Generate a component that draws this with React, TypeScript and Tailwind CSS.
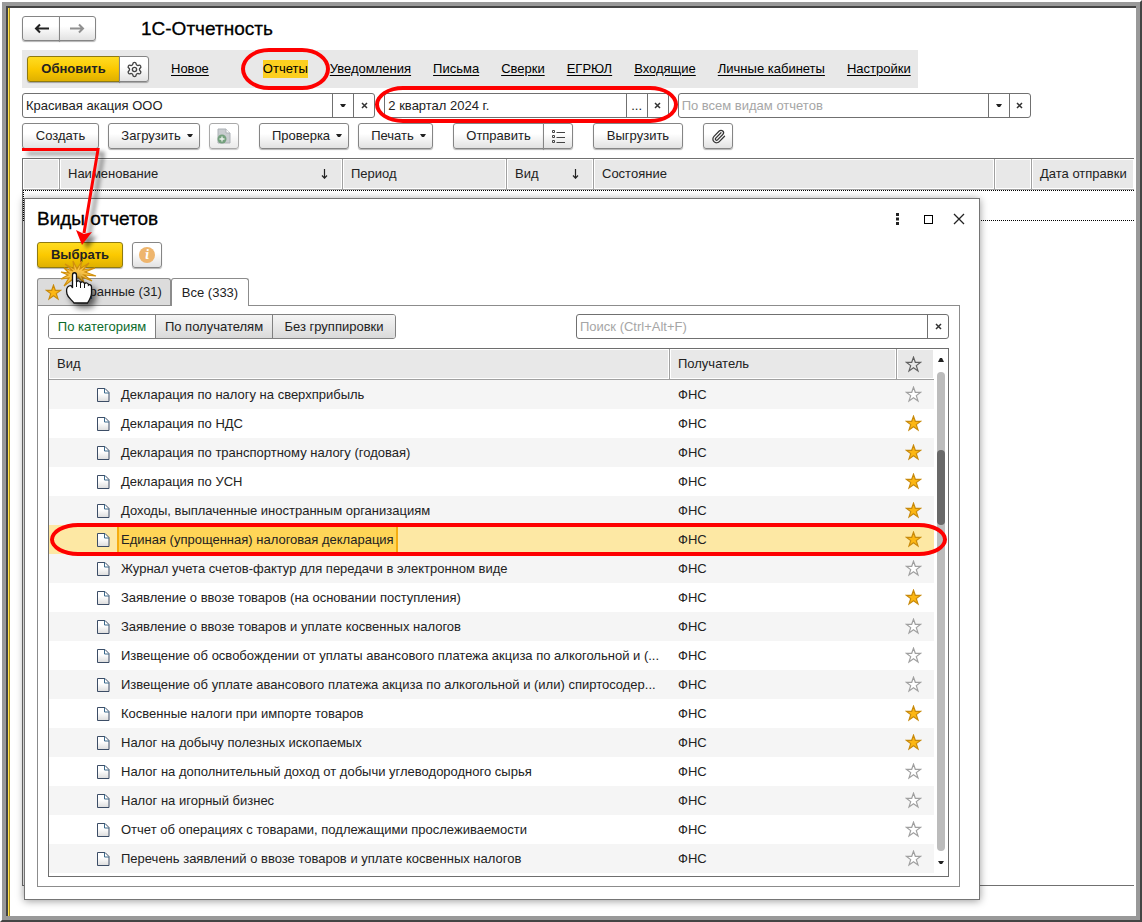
import { useState } from "react";
import { Paperclip, Settings } from "lucide-react";

interface Report {
  name: string;
  favorite?: boolean;
}

const reports: Report[] = [
  { name: "Декларация по налогу на сверхприбыль" },
  { name: "Декларация по НДС", favorite: true },
  { name: "Декларация по транспортному налогу (годовая)", favorite: true },
  { name: "Декларация по УСН", favorite: true },
  { name: "Доходы, выплаченные иностранным организациям", favorite: true },
  { name: "Единая (упрощенная) налоговая декларация", favorite: true },
  { name: "Журнал учета счетов-фактур для передачи в электронном виде" },
  { name: "Заявление о ввозе товаров (на основании поступления)", favorite: true },
  { name: "Заявление о ввозе товаров и уплате косвенных налогов" },
  { name: "Извещение об освобождении от уплаты авансового платежа акциза по алкогольной и (..." },
  { name: "Извещение об уплате авансового платежа акциза по алкогольной и (или) спиртосодер..." },
  { name: "Косвенные налоги при импорте товаров", favorite: true },
  { name: "Налог на добычу полезных ископаемых", favorite: true },
  { name: "Налог на дополнительный доход от добычи углеводородного сырья" },
  { name: "Налог на игорный бизнес" },
  { name: "Отчет об операциях с товарами, подлежащими прослеживаемости" },
  { name: "Перечень заявлений о ввозе товаров и уплате косвенных налогов" },
];

const sections = ["Уведомления", "Письма", "Сверки", "ЕГРЮЛ", "Входящие", "Личные кабинеты", "Настройки"];

const btn =
  "flex items-center justify-center border border-[#858585] bg-linear-to-b from-white from-40% to-[#e2e2e2] shadow-[0_1px_1px_rgba(0,0,0,0.3)]";
const yellowBtn =
  "flex items-center justify-center border border-[#8f7a10] bg-linear-to-b from-[#ffdc1e] via-[#fbc900] to-[#dfb000] font-bold shadow-[0_1px_1px_rgba(0,0,0,0.3)]";
const th = "border-b border-l border-[#a0a0a0] bg-[#e8e8e8] px-2 text-left font-normal shadow-[inset_0_0_0_1px_white]";

function Caret({ up = false }: { up?: boolean }) {
  return (
    <svg width="6" height="4" viewBox="0 0 6 4" className="shrink-0" aria-hidden="true">
      <path d={up ? "M0 4h6L4 0H2z" : "M0 0h6L4 3H2z"} fill="#222" />
    </svg>
  );
}

function Cross() {
  return (
    <svg width="7" height="7" viewBox="0 0 7 7" aria-hidden="true">
      <path d="M1 1l5 5M6 1L1 6" stroke="#333" strokeWidth="1.5" />
    </svg>
  );
}

function Star({ fill = "none", stroke = "#a0a0a0" }: { fill?: string; stroke?: string }) {
  return (
    <svg width="17" height="17" viewBox="0 0 17 17" aria-hidden="true">
      <path
        d="M8.5 1.2l1.8 5.1h5.4l-4.4 3.3 1.7 5.3-4.5-3.2L4 14.9l1.7-5.3L1.3 6.3h5.4z"
        fill={fill}
        stroke={stroke}
        strokeWidth="1.2"
      />
    </svg>
  );
}

function FileIcon() {
  return (
    <svg width="13" height="14" viewBox="0 0 13 14" aria-hidden="true">
      <defs>
        <linearGradient id="sheet" x1="0" y1="0" x2="0" y2="1">
          <stop offset="0.4" stopColor="#fff" />
          <stop offset="1" stopColor="#dcdcdc" />
        </linearGradient>
      </defs>
      <path d="M.5.5h7.5l4 4v9H.5z" fill="url(#sheet)" stroke="#3c4d66" />
      <path d="M7.5.5v4.5h4.5" fill="none" stroke="#3c6a8c" />
    </svg>
  );
}

function SortArrow() {
  return (
    <svg width="7" height="10" viewBox="0 0 7 10" aria-hidden="true">
      <path d="M3.5 0v9M1 6.5l2.5 2.7L6 6.5" fill="none" stroke="#222" strokeWidth="1.2" />
    </svg>
  );
}

function NavArrow({ right = false, color }: { right?: boolean; color: string }) {
  return (
    <svg width="15" height="11" viewBox="0 0 15 11" aria-hidden="true">
      <path
        d={right ? "M0 5.5h13M9 1.5l4 4-4 4" : "M15 5.5H2M6 1.5l-4 4 4 4"}
        fill="none"
        stroke={color}
        strokeWidth="2"
      />
    </svg>
  );
}

function Ring({ className }: { className: string }) {
  return <span className={`pointer-events-none absolute z-10 rounded-[28px/50%] border-4 border-[#fe0000] ${className}`} />;
}

interface FieldProps {
  label: string;
  value?: string;
  placeholder?: string;
  choice?: React.ReactNode;
}

function Field({ label, value = "", placeholder, choice }: FieldProps) {
  const [text, setText] = useState(value);
  return (
    <div className="flex h-[25px] min-w-0 rounded-[3px] border border-[#707070] bg-white">
      <input
        aria-label={label}
        value={text}
        placeholder={placeholder}
        onChange={(e) => setText(e.target.value)}
        className="min-w-0 flex-1 px-[3px] outline-none placeholder:text-[#a6a6a6]"
      />
      {choice && (
        <button aria-label="Выбрать значение" className="flex w-[21px] items-center justify-center border-l border-[#707070]">
          {choice}
        </button>
      )}
      <button
        aria-label="Очистить"
        onClick={() => setText("")}
        className="flex w-[21px] items-center justify-center border-l border-[#707070]"
      >
        <Cross />
      </button>
    </div>
  );
}

function RedArrow() {
  return (
    <svg
      width="90"
      height="110"
      viewBox="0 0 90 110"
      className="pointer-events-none absolute left-0 top-[20px] z-30 drop-shadow-[5px_4px_2px_rgba(0,0,0,0.5)]"
      aria-hidden="true"
    >
      <path d="M0 6.500H76L62 90" fill="none" stroke="#fe0000" strokeWidth="3" />
      <path d="M60 102l-6-15 8 4 8-2z" fill="#fe0000" />
    </svg>
  );
}

function ClickHand() {
  return (
    <svg
      width="48"
      height="60"
      viewBox="0 0 48 60"
      className="pointer-events-none absolute left-[21px] top-[16px] z-20"
      aria-hidden="true"
    >
      <path
        d="M15 13L7 6l9 5-1-8 4 8 5-8-2 8 9-6-6 7 12-2-10 4 11 4-12-1 8 6-10-4 2 6-6-6-5 2-9 7 5-8-8 1 7-4-7-3 8 1-5-5z"
        fill="#fbc64a"
        stroke="#d08f0c"
        strokeWidth="1.2"
      />
      <g className="drop-shadow-[4px_4px_3px_rgba(0,0,0,0.6)]">
        <path
          d="M14.500 17c0-3 4-3 4 0v7c1-2 4-1 4 1 1-2 4-1 4 1 1-2 4-1 4 1 1-1 3 0 3 2v6c0 4-2 7-4 10H16c-2-3-6-5-7-9-1-4 0-7 2-8 2-1 3 0 3.500 2z"
          fill="#fff"
          stroke="#111"
          strokeWidth="1.300"
        />
        <path d="M18.500 23v6M22.500 24v6M26.500 25v5" stroke="#111" strokeWidth="1" />
      </g>
    </svg>
  );
}

function ReportsTable() {
  const [selected, setSelected] = useState(5);
  return (
    <div className="mt-[9px] flex border border-[#6e6e6e] pb-[3px]">
      <table className="w-full flex-1 table-fixed border-separate border-spacing-0">
        <thead>
          <tr className="h-[31px]">
            <th className={`${th} border-l-0`}>Вид</th>
            <th className={`${th} w-[227px]`}>Получатель</th>
            <th className={`${th} w-[38px]`} aria-label="Избранное">
              <Star stroke="#606060" />
            </th>
          </tr>
        </thead>
        <tbody>
          {reports.map((report, idx) => (
            <tr
              key={report.name}
              onClick={() => setSelected(idx)}
              className={`relative h-[29px] ${idx === selected ? "bg-[#fde8a4]" : idx % 2 === 0 ? "bg-[#f5f5f5]" : "bg-white"}`}
            >
              <td className="p-0">
                <div className="flex items-center pl-12">
                  <FileIcon />
                  <span
                    className={`ml-[7px] flex h-[29px] items-center whitespace-nowrap border-x-2 px-[2px] ${
                      idx === selected ? "border-[#f5ad10] bg-[#ffd557]" : "border-transparent"
                    }`}
                  >
                    {report.name}
                  </span>
                </div>
                {idx === selected && <Ring className="-inset-y-[2px] left-px -right-[13px]" />}
              </td>
              <td className="py-0 pl-[9px]">ФНС</td>
              <td className="py-0 pl-[9px]">
                {report.favorite ? <Star fill="#fdb713" stroke="#c88a0c" /> : <Star fill="#fff" />}
              </td>
            </tr>
          ))}
        </tbody>
      </table>
      <div className="flex w-[14px] flex-col items-center pb-[8px] pt-[9px]">
        <Caret up />
        <div className="my-[10px] w-2 flex-1 rounded-full bg-[#bcbcbc] pt-[78px]">
          <div className="h-[75px] rounded-full bg-[#696969]" />
        </div>
        <Caret />
      </div>
    </div>
  );
}

function ReportsDialog() {
  return (
    <div
      role="dialog"
      aria-label="Виды отчетов"
      className="absolute left-px right-[154px] top-[39px] border border-[#757575] bg-white px-3 pb-3 shadow-[0_1px_8px_rgba(0,0,0,0.4)]"
    >
      <div className="mb-[3px] flex h-10 items-center justify-between pr-[2px]">
        <h2 className="text-[19px] font-normal text-black [-webkit-text-stroke:0.3px_black]">Виды отчетов</h2>
        <div className="flex items-center gap-5">
          <button aria-label="Ещё">
            <svg width="12" height="12" viewBox="0 0 12 12" fill="#222">
              <path d="M4 0h3v3H4zM4 4.500h3v3H4zM4 9h3v3H4z" />
            </svg>
          </button>
          <button aria-label="Развернуть" className="h-[9px] w-[9px] border border-black" />
          <button aria-label="Закрыть">
            <svg width="12" height="12" viewBox="0 0 12 12">
              <path d="M1 1l10 10M11 1L1 11" stroke="#222" strokeWidth="1.300" />
            </svg>
          </button>
        </div>
      </div>
      <div className="flex gap-[9px]">
        <div className="relative">
          <button className={`${yellowBtn} h-[26px] w-[86px] rounded-[3px]`}>Выбрать</button>
          <ClickHand />
        </div>
        <button aria-label="Справка" className={`${btn} h-[26px] w-[30px] rounded-[3px]`}>
          <span className="flex h-4 w-4 items-center justify-center rounded-full bg-[#eeb56d] font-serif text-sm font-bold italic leading-none text-white">
            i
          </span>
        </button>
      </div>
      <div role="tablist" className="mt-[10px] flex">
        <button
          role="tab"
          aria-selected={false}
          className="flex h-[27px] w-[134px] items-center gap-[5px] whitespace-nowrap rounded-t-[3px] border border-b-0 border-[#8c8c8c] bg-[#dcdcdc] pl-[7px]"
        >
          <Star fill="#fdb713" stroke="#c88a0c" />
          Избранные (31)
        </button>
        <button
          role="tab"
          aria-selected={true}
          className="relative -mb-px h-7 w-[78px] rounded-t-[3px] border border-b-0 border-[#8c8c8c] bg-white"
        >
          Все (333)
        </button>
      </div>
      <div className="mr-[7px] border border-[#8c8c8c] px-[10px] pb-[9px] pt-2">
        <div className="flex items-center justify-between">
          <div className="flex h-[25px] overflow-hidden rounded-[3px] border border-[#808080]">
            <button className="w-[106px] bg-white text-[#0b6b2b]">По категориям</button>
            <button className="w-[117px] border-l border-[#808080] bg-linear-to-b from-[#f5f5f5] to-[#dadada]">
              По получателям
            </button>
            <button className="w-[123px] border-l border-[#808080] bg-linear-to-b from-[#f5f5f5] to-[#dadada]">
              Без группировки
            </button>
          </div>
          <div className="w-[373px]">
            <Field label="Поиск" placeholder="Поиск (Ctrl+Alt+F)" />
          </div>
        </div>
        <ReportsTable />
      </div>
    </div>
  );
}

export default function App() {
  return (
    <div className="flex min-h-screen flex-col border-2 border-b-[#444] border-l-white border-r-[#444] border-t-white bg-white font-['Liberation_Sans',Arial,sans-serif] text-[13px] leading-4 text-[#222]">
      <div className="flex flex-1 flex-col border-4 border-[#999]">
        <div className="flex flex-1 flex-col border-l-2 border-t-2 border-[#444]">
          <div className="flex flex-1 flex-col border-l border-[#ffe14d]">
            <main className="flex flex-1 flex-col border-l border-[#a88d1c] pb-[30px] pl-3 pr-[2px] pt-2">
              <header className="flex items-center gap-[45px]">
                <div className="flex">
                  <button aria-label="Назад" className={`${btn} h-[25px] w-[38px] rounded-l-[3px]`}>
                    <NavArrow color="#222" />
                  </button>
                  <button aria-label="Вперед" className={`${btn} -ml-px h-[25px] w-[37px] rounded-r-[3px]`}>
                    <NavArrow right color="#909090" />
                  </button>
                </div>
                <h1 className="text-[19px] font-normal text-black [-webkit-text-stroke:0.3px_black]">1С-Отчетность</h1>
              </header>

              <nav className="mt-[9px] flex h-[38px] w-fit items-center gap-[22px] bg-[#e8e8e8] pl-[5px] pr-[7px] text-black">
                <div className="flex">
                  <button className={`${yellowBtn} h-[26px] w-[93px] rounded-l-[3px] text-[#222]`}>Обновить</button>
                  <button aria-label="Настройка" className={`${btn} -ml-px h-[26px] w-[30px] rounded-r-[3px]`}>
                    <Settings size={17} strokeWidth={1.9} color="#444" />
                  </button>
                </div>
                <a href="#new" className="underline underline-offset-2">
                  Новое
                </a>
                <a href="#reports" className="relative ml-8 bg-[#fccf1f] py-px">
                  Отчеты
                  <Ring className="-inset-x-[22px] -inset-y-3" />
                </a>
                {sections.map((section) => (
                  <a key={section} href="#section" className="whitespace-nowrap underline underline-offset-2">
                    {section}
                  </a>
                ))}
              </nav>

              <div className="mt-[5px] grid grid-cols-[353fr_284fr_353fr] gap-[9px] pr-[103px]">
                <Field label="Организация" value="Красивая акация ООО" choice={<Caret />} />
                <div className="relative">
                  <Field label="Период" value="2 квартал 2024 г." choice="..." />
                  <Ring className="-inset-x-[9px] -bottom-[5px] -top-[7px]" />
                </div>
                <Field label="Вид отчета" placeholder="По всем видам отчетов" choice={<Caret />} />
              </div>

              <div className="mt-[5px] flex gap-[9px]">
                <div className="relative">
                  <button className={`${btn} h-[26px] w-[77px] rounded-[3px]`}>Создать</button>
                  <RedArrow />
                </div>
                <button className={`${btn} h-[26px] w-[92px] gap-[6px] rounded-[3px] pl-[6px]`}>
                  Загрузить <Caret />
                </button>
                <button aria-label="Добавить файл" className={`${btn} h-[26px] w-[30px] rounded-[3px] opacity-70`}>
                  <svg width="14" height="16" viewBox="0 0 14 16">
                    <path d="M1 1h8l4 4v10H1z" fill="#b3b8bd" stroke="#8b9299" />
                    <path d="M9 1v4h4" fill="#fff" stroke="#8b9299" />
                    <circle cx="5" cy="11" r="4.500" fill="#3c7a48" />
                    <path d="M5 8.500v5M2.500 11h5" stroke="#e6efe7" strokeWidth="1.300" />
                  </svg>
                </button>
                <button className={`${btn} ml-[11px] h-[26px] w-[90px] gap-[6px] rounded-[3px] pl-[6px]`}>
                  Проверка <Caret />
                </button>
                <button className={`${btn} h-[26px] w-[75px] gap-[6px] rounded-[3px] pl-[6px]`}>
                  Печать <Caret />
                </button>
                <div className="ml-[11px] flex">
                  <button className={`${btn} h-[26px] w-[91px] rounded-l-[3px]`}>Отправить</button>
                  <button aria-label="Список" className={`${btn} -ml-px h-[26px] w-[30px] rounded-r-[3px]`}>
                    <svg width="13" height="13" viewBox="0 0 13 13" fill="none" stroke="#444">
                      <path d="M4.500 2.500H13M4.500 7.500H13M4.500 12.500H13" />
                      <path d="M.5.5h2v2h-2zM.5 5.500h2v2h-2zM.5 10.500h2v2h-2z" />
                    </svg>
                  </button>
                </div>
                <button className={`${btn} ml-[11px] h-[26px] w-[90px] rounded-[3px]`}>Выгрузить</button>
                <button aria-label="Вложения" className={`${btn} ml-[11px] h-[26px] w-[30px] rounded-[3px]`}>
                  <Paperclip size={15} strokeWidth={2} color="#333" />
                </button>
              </div>

              <div className="relative mt-[9px] min-h-[728px] flex-1 border-y border-l border-[#707070]">
                <table className="w-full table-fixed border-separate border-spacing-0">
                  <thead>
                    <tr className="h-[31px]">
                      <th className={`${th} w-[36px] border-l-0`} />
                      <th className={`${th} w-[283px]`}>
                        <div className="flex items-center justify-between pr-[6px]">
                          Наименование <SortArrow />
                        </div>
                      </th>
                      <th className={`${th} w-[164px]`}>Период</th>
                      <th className={`${th} w-[87px]`}>
                        <div className="flex items-center justify-between pr-[6px]">
                          Вид <SortArrow />
                        </div>
                      </th>
                      <th className={th}>Состояние</th>
                      <th className={`${th} w-[37px]`} />
                      <th className={`${th} w-[103px] whitespace-nowrap`}>Дата отправки</th>
                    </tr>
                  </thead>
                  <tbody>
                    <tr className="h-[31px]">
                      <td colSpan={7} className="border-y border-l border-dotted border-black" />
                    </tr>
                  </tbody>
                </table>
                <ReportsDialog />
              </div>
            </main>
          </div>
        </div>
      </div>
    </div>
  );
}
